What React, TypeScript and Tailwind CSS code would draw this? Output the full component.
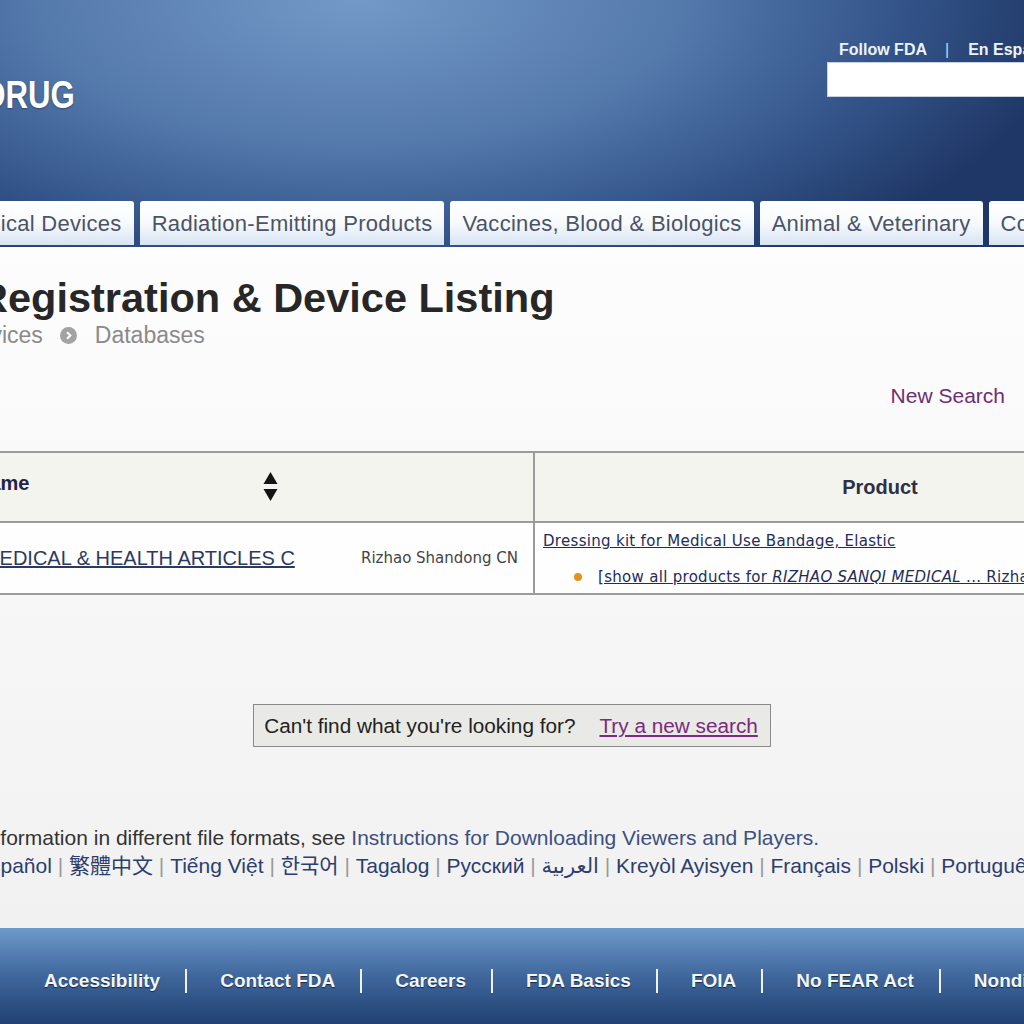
import React from "react";

const tabs = [
  "Medical Devices",
  "Radiation-Emitting Products",
  "Vaccines, Blood & Biologics",
  "Animal & Veterinary",
  "Cosmetics",
];

const languages = [
  "Español",
  "繁體中文",
  "Tiếng Việt",
  "한국어",
  "Tagalog",
  "Русский",
  "العربية",
  "Kreyòl Ayisyen",
  "Français",
  "Polski",
  "Português",
];

const footerLinks = [
  "Accessibility",
  "Contact FDA",
  "Careers",
  "FDA Basics",
  "FOIA",
  "No FEAR Act",
  "Nondiscrimination",
];

function SortIcon() {
  return (
    <svg width="15" height="30" viewBox="0 0 15 30" className="shrink-0">
      <polygon points="7.5,0 14.5,12 0.5,12" fill="#141414" />
      <polygon points="0.5,17 14.5,17 7.5,29" fill="#141414" />
    </svg>
  );
}

function CrumbArrow() {
  return (
    <svg width="17" height="17" viewBox="0 0 17 17" className="shrink-0">
      <circle cx="8.5" cy="8.5" r="8.5" fill="#a3a3a3" />
      <path d="M7 5.2 L10.4 8.5 L7 11.8" fill="none" stroke="#fff" strokeWidth="2" />
    </svg>
  );
}

export default function App() {
  return (
    <div className="w-[1024px] min-h-[1024px] overflow-hidden font-['Liberation_Sans','Noto_Sans_CJK_TC','DejaVu_Sans',sans-serif]">
      {/* header */}
      <header className="h-[247px] flex flex-col bg-[radial-gradient(70%_130%_at_35%_0%,#7299c8_0%,#5479ab_45%,#34558a_75%,#1f3766_100%)]">
        <div className="flex flex-1 justify-between">
          <div className="pt-[76px]">
            <span className="inline-block ml-[-17px] origin-left scale-x-[0.82] text-[38px] leading-[38px] font-bold text-white [text-shadow:0_1px_2px_rgba(0,0,0,0.35)]">
              DRUG
            </span>
          </div>
          <div className="w-[197px] shrink-0 pt-[40px]">
            <div className="flex items-center pl-[12px] whitespace-nowrap text-[16px] leading-[20px] font-bold text-[#eef3fa]">
              <span>Follow FDA</span>
              <span className="ml-[18px] font-normal text-[#c9d6e8]">|</span>
              <span className="ml-[19px]">En Español</span>
            </div>
            <div className="mt-[2px] h-[35px] w-[240px] bg-white border border-[#c7d2e0]" />
          </div>
        </div>
        <nav className="flex h-[46px] ml-[-55px] gap-[6px]">
          {tabs.map((t) => (
            <div
              key={t}
              className="h-[44px] shrink-0 flex items-center px-[12px] rounded-t-[3px] bg-linear-to-b from-white via-[#f7fafd] to-[#d7e4f2] whitespace-nowrap text-[22px] tracking-[0.3px] text-[#4b5365]"
            >
              {t}
            </div>
          ))}
        </nav>
      </header>

      {/* main content */}
      <main className="bg-linear-to-b from-[#fdfdfd] to-[#f1f1f2] pt-[30px] pb-[48px]">
        <h1 className="ml-[-22px] whitespace-nowrap text-[41.5px] leading-[42px] font-bold text-[#272727]">
          Registration &amp; Device Listing
        </h1>
        <div className="mt-[5px] ml-[-39px] flex items-center whitespace-nowrap text-[23px] leading-[23px] text-[#8a8a8a]">
          <span>Devices</span>
          <span className="ml-[17px] mr-[18px] flex">
            <CrumbArrow />
          </span>
          <span>Databases</span>
        </div>

        <div className="mt-[37px] flex justify-end pr-[19px] text-[21px] leading-[24px] text-[#6e2e72]">
          New Search
        </div>

        {/* results table */}
        <div className="mt-[43px] ml-[-65px] w-[1290px] border-y-2 border-[#9b9b9b]">
          <div className="grid grid-cols-[600px_690px] h-[70px] bg-[#f4f4ef] border-b-2 border-[#9b9b9b]">
            <div className="flex items-center pl-[40px] border-r-2 border-[#9b9b9b]">
              <span className="w-[288px] pb-[8px] text-[20px] leading-[24px] font-bold text-[#23234a]">
                Name
              </span>
              <SortIcon />
            </div>
            <div className="flex items-center justify-center text-[20px] leading-[24px] font-bold text-[#2e3044]">
              Product
            </div>
          </div>
          <div className="grid grid-cols-[600px_690px] h-[70px] bg-[#fefefe]">
            <div className="flex items-center justify-between pr-[15px] border-r-2 border-[#9b9b9b] whitespace-nowrap">
              <span className="ml-[-101px] text-[20px] leading-[24px] underline text-[#2b3a5e]">
                RIZHAO SANQI MEDICAL &amp; HEALTH ARTICLES C
              </span>
              <span className="font-['DejaVu_Sans',sans-serif] text-[15px] text-[#444]">
                Rizhao Shandong CN
              </span>
            </div>
            <div className="pl-[8px] pt-[8px] whitespace-nowrap font-['DejaVu_Sans',sans-serif] text-[15px] leading-[20px] text-[#1f2d5a]">
              <div className="underline tracking-[0.3px]">
                Dressing kit for Medical Use Bandage, Elastic
              </div>
              <div className="mt-[16px] flex items-center pl-[31px]">
                <span className="w-[8px] h-[8px] rounded-full bg-[#e8901a] mr-[16px]" />
                <span className="underline tracking-[0.3px]">
                  [show all products for <i>RIZHAO SANQI MEDICAL</i> ... Rizhao Shandong CN]
                </span>
              </div>
            </div>
          </div>
        </div>

        {/* no result hint */}
        <div className="mt-[109px] mx-auto w-fit h-[43px] flex items-center pl-[10px] pr-[12px] border border-[#8a8a8a] bg-[#e9e9e5] whitespace-nowrap text-[20.75px] text-[#222]">
          <span>Can't find what you're looking for?</span>
          <span className="ml-[24px] underline text-[#7a2a80]">Try a new search</span>
        </div>

        <div className="mt-[77px] ml-[-16px] whitespace-nowrap text-[21px] leading-[28px] text-[#333]">
          information in different file formats, see{" "}
          <span className="text-[#3d5080]">Instructions for Downloading Viewers and Players.</span>
        </div>
        <div className="ml-[-24px] whitespace-nowrap text-[21px] leading-[28px] text-[#2c3e6e]">
          {languages.map((l, i) => (
            <span key={l}>
              {i > 0 && <span className="text-[#9a9a9a]"> | </span>}
              {l}
            </span>
          ))}
        </div>
      </main>

      {/* footer */}
      <footer className="h-[100px] pt-[41px] pl-[44px] flex items-start bg-linear-to-b from-[#6c9acb] via-[#3e659a] to-[#1f3e6f]">
        <div className="flex items-center whitespace-nowrap text-[19px] leading-[24px] font-bold text-[#f2f6fb] [text-shadow:0_1px_1px_rgba(0,0,0,0.6)]">
          {footerLinks.map((f, i) => (
            <React.Fragment key={f}>
              {i > 0 && <span className="w-[2px] h-[24px] bg-[#eef3fa] ml-[25px] mr-[33px]" />}
              <span>{f}</span>
            </React.Fragment>
          ))}
        </div>
      </footer>
    </div>
  );
}
